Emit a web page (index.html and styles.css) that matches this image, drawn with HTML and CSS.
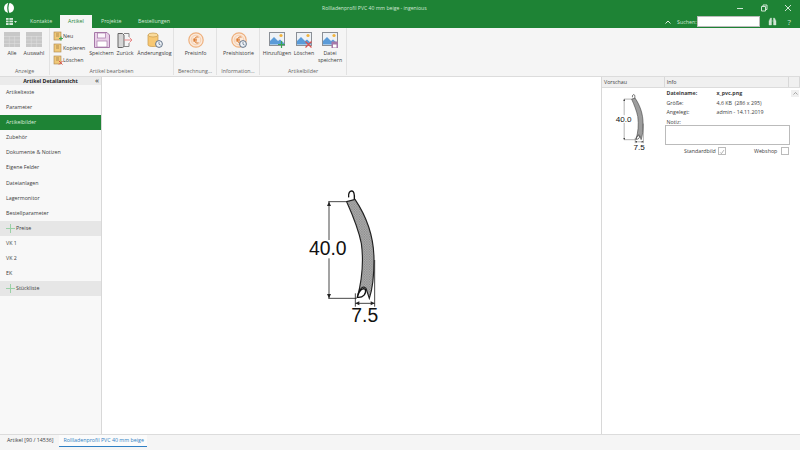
FILE: index.html
```html
<!DOCTYPE html>
<html lang="de">
<head>
    <meta charset="UTF-8">
    <title>Rollladenprofil PVC 40 mm beige - ingenious</title>
    <link rel="stylesheet" href="styles.css">
</head>
<body>
    <svg class="defs" width="0" height="0">
        <pattern id="raster" width="5" height="5" patternUnits="userSpaceOnUse">
            <rect width="5" height="5" fill="#b4b4b4"/>
            <circle cx="1.5" cy="1.5" r="1.2" fill="#6a6a6a"/>
            <circle cx="4" cy="4" r="1.2" fill="#6a6a6a"/>
        </pattern>
        <symbol id="profil" viewBox="0 0 300 450">
            <path d="M146 52C144 38 150 32 156 33C162 34 164 40 163 58" fill="none" stroke="#111" stroke-width="4"/>
            <path d="M140 65L165 58C200 110 222 170 222 240C222 290 218 325 208 355L198 325C190 316 180 322 172 352C186 300 192 250 184 190C176 150 158 105 140 65Z" fill="url(#raster)" stroke="#222" stroke-width="3.5"/>
            <path d="M172 352C176 332 188 322 196 328C200 340 190 354 172 352Z" fill="#fff" stroke="#111" stroke-width="4"/>
            <path d="M85 65H140M85 355H170M87 65V180M87 235V355M166 340V380M224 240V380M166 370H224" fill="none" stroke="#222" stroke-width="2.5"/>
            <path d="M87 65L81 78H93ZM87 355L81 342H93ZM166 370L178 364V376ZM224 370L212 364V376Z" fill="#222"/>
        </symbol>
        <symbol id="tabelle" viewBox="0 0 16 16">
            <rect width="16" height="15" fill="#c8c8c8"/>
            <path d="M0 4.5H16M0 8H16M0 11.5H16M5.3 4V15M10.6 4V15" stroke="#dedede" stroke-width=".6"/>
        </symbol>
        <symbol id="klein" viewBox="0 0 10 10">
            <rect x="1" y="1" width="7" height="8" fill="#f0c878" stroke="#a8824a" stroke-width=".6"/>
            <path d="M3 3H6M3 5H6" stroke="#8a6a3a" stroke-width=".6"/>
        </symbol>
        <symbol id="euro" viewBox="0 0 16 16">
            <circle cx="8" cy="8" r="7.2" fill="#fbe9da" stroke="#eeb17f" stroke-width="1.2"/>
            <circle cx="8" cy="8" r="4.8" fill="none" stroke="#f3c9a6" stroke-width=".8"/>
            <path d="M10.5 5.2C8.5 4.2 6.5 5.5 6.5 8C6.5 10.5 8.5 11.8 10.5 10.8M4.8 7.2H9M4.8 8.9H9" fill="none" stroke="#dc7b30" stroke-width="1"/>
        </symbol>
        <symbol id="uhr" viewBox="0 0 8 8">
            <circle cx="4" cy="4" r="3.4" fill="#eef3f8" stroke="#56677c" stroke-width=".9"/>
            <path d="M4 2V4.2L5.6 5" fill="none" stroke="#56677c" stroke-width=".7"/>
        </symbol>
        <symbol id="bild" viewBox="0 0 16 14">
            <rect x=".5" y=".5" width="15" height="13" fill="#eef2f6" stroke="#8a8f96"/>
            <path d="M1 12.5V9L5 5L9 9L11 7.5L15 11V12.5Z" fill="#5a9bd8"/>
            <circle cx="12" cy="3.5" r="1.6" fill="#f2b33d"/>
        </symbol>
    </svg>

    <header class="kopf">
        <div class="titelzeile">
            <svg class="logo" width="12" height="12" viewBox="0 0 12 12"><circle cx="6" cy="6" r="5" fill="#fff"/><path d="M6 .5C4.5 4 4.5 8 6 11.5" stroke="#1e8335" stroke-width="1.2" fill="none"/></svg>
            <span class="titel">Rollladenprofil PVC 40 mm beige - ingenious</span>
            <div class="fenster">
                <svg width="8" height="8" viewBox="0 0 8 8"><path d="M1 4.5H7" stroke="#cfe6d4"/></svg>
                <svg width="8" height="8" viewBox="0 0 8 8"><path d="M1.5 2.5H5.5V7H1.5ZM3 2.5V1H7V5.5H5.5" fill="none" stroke="#cfe6d4"/></svg>
                <svg width="8" height="8" viewBox="0 0 8 8"><path d="M1 1L7 7M7 1L1 7" stroke="#cfe6d4"/></svg>
            </div>
        </div>
        <nav class="tabzeile">
            <div class="appmenu">
                <svg width="7" height="7" viewBox="0 0 7 7"><rect width="7" height="7" fill="#d5e8d9"/><path d="M0 2.3H7M0 4.6H7M3 0V7" stroke="#1e8335" stroke-width=".7"/></svg>
                <svg width="3" height="2" viewBox="0 0 3 2"><path d="M0 0H3L1.5 2Z" fill="#d5e8d9"/></svg>
            </div>
            <span class="tab kontakte">Kontakte</span>
            <span class="tab aktiv">Artikel</span>
            <span class="tab projekte">Projekte</span>
            <span class="tab bestellungen">Bestellungen</span>
            <div class="suche">
                <svg width="6" height="4" viewBox="0 0 6 4"><path d="M.5 3.5L3 1L5.5 3.5" fill="none" stroke="#dcecdf"/></svg>
                <span class="suchlabel">Suchen:</span>
                <span class="suchfeld"></span>
                <svg class="fernglas" width="9" height="9" viewBox="0 0 9 9"><path d="M1 8V4L2.5 1H3.5V8ZM5.5 8V1H6.5L8 4V8ZM3.5 4H5.5" fill="#cfe6d4" stroke="#cfe6d4" stroke-width=".4"/></svg>
                <span class="hilfe">?</span>
            </div>
        </nav>
    </header>

    <section class="ribbon">
        <div class="gruppe g-anzeige">
            <div class="befehle">
                <div class="gross b16"><svg class="ico" viewBox="0 0 16 16"><use href="#tabelle"/></svg><span>Alle</span></div>
                <div class="gross b16"><svg class="ico" viewBox="0 0 16 16"><use href="#tabelle"/></svg><span>Auswahl</span></div>
            </div>
            <div class="gruppenname">Anzeige</div>
        </div>
        <div class="gruppe g-artikel">
            <div class="befehle">
                <div class="spalte">
                    <div class="kleinzeile"><svg width="10" height="10" viewBox="0 0 10 10"><use href="#klein"/><path d="M6 7.5H10M8 5.5V9.5" stroke="#3aa655" stroke-width="1.1"/></svg><span>Neu</span></div>
                    <div class="kleinzeile"><svg width="10" height="10" viewBox="0 0 10 10"><use href="#klein"/></svg><span>Kopieren</span></div>
                    <div class="kleinzeile"><svg width="10" height="10" viewBox="0 0 10 10"><use href="#klein"/><path d="M6 6L9.5 9.5M9.5 6L6 9.5" stroke="#d9534f" stroke-width="1"/></svg><span>Löschen</span></div>
                </div>
                <div class="gross b-speichern">
                    <svg class="ico" viewBox="0 0 16 16"><path d="M.5.5H13L15.5 3V15.5H.5Z" fill="#e8cfe8" stroke="#a678a8"/><rect x="3.5" y="1" width="8" height="5" fill="#fbf5fb" stroke="#a678a8" stroke-width=".7"/><rect x="3" y="9" width="10" height="6" fill="#fff" stroke="#a678a8" stroke-width=".7"/></svg>
                    <span>Speichern</span>
                </div>
                <div class="gross b-zurueck">
                    <svg class="ico" viewBox="0 0 16 16"><path d="M1 1.5H5.5L7 3V14.5L5.5 15.5H1Z" fill="#d6d6d6" stroke="#666"/><path d="M7 1.5H12V5M12 11V14.5H7" fill="none" stroke="#888"/><path d="M7 8H15M12.5 5.5L15 8L12.5 10.5" fill="none" stroke="#e88a8a"/></svg>
                    <span>Zurück</span>
                </div>
                <div class="gross b-log">
                    <svg class="ico" viewBox="0 0 16 16"><path d="M1 3V13C1 15 11 15 11 13V3Z" fill="#f7c873" stroke="#c79a4a" stroke-width=".7"/><ellipse cx="6" cy="3" rx="5" ry="2" fill="#fadb9c" stroke="#c79a4a" stroke-width=".7"/><use href="#uhr" x="8" y="8" width="8" height="8"/></svg>
                    <span>Änderungslog</span>
                </div>
            </div>
            <div class="gruppenname">Artikel bearbeiten</div>
        </div>
        <div class="gruppe g-berechnung">
            <div class="befehle">
                <div class="gross b-preis"><svg class="ico" viewBox="0 0 16 16"><use href="#euro"/></svg><span>Preisinfo</span></div>
            </div>
            <div class="gruppenname">Berechnung...</div>
        </div>
        <div class="gruppe g-info">
            <div class="befehle">
                <div class="gross b-preis"><svg class="ico" viewBox="0 0 16 16"><use href="#euro"/><use href="#uhr" x="8" y="8" width="8" height="8"/></svg><span>Preishistorie</span></div>
            </div>
            <div class="gruppenname">Information...</div>
        </div>
        <div class="gruppe g-bilder">
            <div class="befehle">
                <div class="gross b-bild">
                    <svg class="ico" viewBox="0 0 16 16"><use href="#bild" width="16" height="14"/><path d="M9 12.5H16M12.5 9V16" stroke="#3aa655" stroke-width="1.2"/></svg>
                    <span>Hinzufügen</span>
                </div>
                <div class="gross b-bild">
                    <svg class="ico" viewBox="0 0 16 16"><use href="#bild" width="16" height="14"/><path d="M9.5 9.5L15.5 15.5M15.5 9.5L9.5 15.5" stroke="#d9534f" stroke-width="1.2"/></svg>
                    <span>Löschen</span>
                </div>
                <div class="gross b-bild">
                    <svg class="ico" viewBox="0 0 16 16"><use href="#bild" width="16" height="14"/><rect x="9.5" y="9.5" width="6.5" height="6.5" fill="#a678a8"/><rect x="11" y="12.5" width="3.5" height="3" fill="#fff"/></svg>
                    <span>Datei<br>speichern</span>
                </div>
            </div>
            <div class="gruppenname">Artikelbilder</div>
        </div>
    </section>

    <main class="inhalt">
        <aside class="seite">
            <div class="seitenkopf"><b>Artikel Detailansicht</b><span class="zuklappen">«</span></div>
            <div class="eintrag">Artikeltexte</div>
            <div class="eintrag">Parameter</div>
            <div class="eintrag gewaehlt">Artikelbilder</div>
            <div class="eintrag">Zubehör</div>
            <div class="eintrag">Dokumente &amp; Notizen</div>
            <div class="eintrag">Eigene Felder</div>
            <div class="eintrag">Dateianlagen</div>
            <div class="eintrag">Lagermonitor</div>
            <div class="eintrag">Bestellparameter</div>
            <div class="eintrag block"><i class="plus"></i>Preise</div>
            <div class="eintrag">VK 1</div>
            <div class="eintrag">VK 2</div>
            <div class="eintrag">EK</div>
            <div class="eintrag block"><i class="plus"></i>Stückliste</div>
        </aside>

        <div class="bildflaeche">
            <svg class="profil-gross" viewBox="0 0 300 450" font-family="'Liberation Sans', sans-serif">
                <use href="#profil" width="300" height="450"/>
                <text x="27" y="225" font-size="58" fill="#111">40.0</text>
                <text x="154" y="425" font-size="58" fill="#111">7.5</text>
            </svg>
        </div>

        <aside class="details">
            <div class="spaltenkopf">
                <span class="k-vorschau">Vorschau</span>
                <span class="k-info">Info</span>
                <span class="k-rest"></span>
            </div>
            <div class="detailkoerper">
                <div class="vorschau">
                    <svg class="profil-klein" viewBox="0 0 300 450" font-family="'Liberation Sans', sans-serif">
                        <use href="#profil" width="300" height="450"/>
                        <text x="27" y="225" font-size="58" fill="#111">40.0</text>
                        <text x="154" y="425" font-size="58" fill="#111">7.5</text>
                    </svg>
                </div>
                <div class="info">
                    <div class="zeile"><b>Dateiname:</b><b>x_pvc.png</b></div>
                    <div class="zeile"><span>Größe:</span><span>4,6 KB&nbsp; (286 x 295)</span></div>
                    <div class="zeile"><span>Angelegt:</span><span>admin - 14.11.2019</span></div>
                    <div class="zeile"><span>Notiz:</span></div>
                    <div class="notiz"></div>
                    <div class="optionen">
                        <span class="o-std">Standardbild</span>
                        <span class="haken"><svg width="8" height="8" viewBox="0 0 8 8"><path d="M1.5 4.5L3.2 6.2L6.5 1.5" fill="none" stroke="#9a9a9a"/></svg></span>
                        <span class="o-web">Webshop</span>
                        <span class="haken"></span>
                    </div>
                </div>
                <div class="rollbalken">
                    <span class="rollknopf"><svg width="5" height="3" viewBox="0 0 5 3"><path d="M.5 2.5L2.5 .5L4.5 2.5" fill="none" stroke="#888" stroke-width=".7"/></svg></span>
                </div>
            </div>
        </aside>
    </main>

    <footer class="fuss">
        <span class="fusstab">Artikel [90 / 14536]</span>
        <span class="fusstab offen">Rollladenprofil PVC 40 mm beige</span>
    </footer>
</body>
</html>
```

FILE: styles.css
```css
* {
    box-sizing: border-box;
}

html, body {
    margin: 0;
    height: 100%;
}

body {
    width: 800px;
    height: 450px;
    overflow: hidden;
    display: flex;
    flex-direction: column;
    background-color: #f5f5f5;
    font-family: "Open Sans", "Liberation Sans", sans-serif;
    font-size: 5.3px;
    color: #3c3c3c;
}

.defs {
    position: absolute;
}

/* kopf */

.kopf {
    height: 28px;
    background-color: #1e8335;
    color: #d5e8d9;
}

.titelzeile {
    height: 15px;
    display: flex;
    align-items: center;
    padding-left: 3px;
}

.titel {
    margin-left: 307px;
    width: 134px;
    white-space: nowrap;
    font-size: 5.1px;
}

.fenster {
    margin-left: auto;
    display: flex;
    gap: 16px;
    padding-right: 8px;
}

.tabzeile {
    height: 13px;
    display: flex;
    align-items: center;
}

.appmenu {
    width: 21px;
    display: flex;
    align-items: center;
    gap: 1px;
    padding-left: 6px;
}

.tab {
    height: 13px;
    line-height: 13px;
    white-space: nowrap;
}

.kontakte {
    margin-left: 9px;
    width: 30px;
}

.tab.aktiv {
    width: 32px;
    text-align: center;
    background-color: #f5f5f5;
    color: #1e8335;
}

.projekte {
    margin-left: 9px;
    width: 37px;
}

.bestellungen {
    width: 40px;
}

.suche {
    margin-left: auto;
    display: flex;
    align-items: center;
}

.suchlabel {
    margin-left: 6px;
    width: 19.5px;
}

.suchfeld {
    width: 63px;
    height: 11px;
    background-color: #fff;
    border: 1px solid #bbb;
}

.fernglas {
    margin-left: 8px;
}

.hilfe {
    margin-left: 11px;
    width: 12.5px;
    font-size: 8px;
    line-height: 13px;
}

/* ribbon */

.ribbon {
    height: 49px;
    display: flex;
    background-color: #f5f5f5;
    border-bottom: 1px solid #dcdcdc;
}

.gruppe {
    height: 47px;
    display: flex;
    flex-direction: column;
    border-right: 1px solid #e2e2e2;
}

.g-anzeige { width: 50px; }
.g-artikel { width: 124px; }
.g-berechnung { width: 43px; }
.g-info { width: 43px; }
.g-bilder { width: 87px; }

.befehle {
    height: 39px;
    display: flex;
}

.gruppenname {
    text-align: center;
    white-space: nowrap;
    line-height: 8px;
    color: #666;
}

.gross {
    display: flex;
    flex-direction: column;
    align-items: center;
    padding-top: 4px;
    text-align: center;
    line-height: 7px;
    white-space: nowrap;
}

.gross .ico {
    width: 16px;
    height: 16px;
    margin-bottom: 2px;
}

.b16 { width: 22px; }
.b16:first-child { margin-left: 1px; }

.spalte {
    width: 39px;
    padding: 2px 0 0 3px;
}

.kleinzeile {
    height: 12px;
    display: flex;
    align-items: center;
}

.b-speichern { width: 25px; }
.b-zurueck { width: 22px; }
.b-log { width: 37px; }
.b-preis { width: 100%; padding-left: 1px; }
.b-bild { width: 27px; }
.b-bild:first-child { margin-left: 3.5px; }
.b-bild:last-child { margin-left: -1px; }

/* inhalt */

.inhalt {
    height: 358px;
    display: flex;
    background-color: #fff;
    border-bottom: 1px solid #dcdcdc;
}

.seite {
    width: 102px;
    background-color: #f8f8f8;
    border-right: 1px solid #d8d8d8;
}

.seitenkopf {
    height: 8px;
    display: flex;
    align-items: center;
    justify-content: center;
    position: relative;
    background-color: #ebebeb;
    color: #222;
}

.zuklappen {
    position: absolute;
    right: 2px;
    top: -2px;
    font-size: 8px;
    line-height: 10px;
}

.eintrag {
    height: 15.1px;
    line-height: 15px;
    padding-left: 6px;
    white-space: nowrap;
}

.gewaehlt {
    background-color: #1e8335;
    color: #dcecdf;
}

.block {
    display: flex;
    align-items: center;
    gap: 1px;
    background-color: #e6e6e6;
}

.plus {
    width: 9px;
    height: 9px;
    background:
        linear-gradient(#9ad0a6, #9ad0a6) center / 100% 1px no-repeat,
        linear-gradient(#9ad0a6, #9ad0a6) center / 1px 100% no-repeat;
}

.bildflaeche {
    width: 499px;
    display: flex;
    align-items: center;
    justify-content: center;
    padding: 0 3px 2px 0;
}

.profil-gross {
    width: 100px;
    height: 150px;
}

.details {
    width: 199px;
    border-left: 1px solid #d8d8d8;
}

.spaltenkopf {
    height: 11px;
    display: flex;
    line-height: 10px;
    background-color: #f0f0f0;
    border-bottom: 1px solid #dcdcdc;
}

.spaltenkopf span {
    padding-left: 2px;
    border-right: 1px solid #d8d8d8;
}

.k-vorschau { width: 63px; }
.k-info { width: 125px; }
.k-rest { width: 11px; }

.detailkoerper {
    display: flex;
}

.vorschau {
    width: 63px;
    padding: 2px 0 0 10px;
}

.profil-klein {
    display: block;
    width: 42px;
    height: 63px;
}

.info {
    width: 125px;
    padding-top: 1px;
}

.zeile {
    height: 9.6px;
    line-height: 9.6px;
    padding-left: 1.5px;
    display: grid;
    grid-template-columns: 50px 1fr;
    white-space: nowrap;
}

.notiz {
    height: 20px;
    margin-top: -2px;
    background-color: #fff;
    border: 1px solid #bbb;
}

.optionen {
    height: 10px;
    display: flex;
    align-items: center;
    padding-top: 2px;
}

.o-std {
    margin-left: 19px;
    width: 34px;
}

.o-web {
    margin-left: 28px;
    width: 27px;
}

.haken {
    width: 8px;
    height: 8px;
    display: flex;
    background-color: #fff;
    border: 1px solid #bbb;
}

.rollbalken {
    width: 10px;
    padding: 2px 0 0 1px;
}

.rollknopf {
    width: 8px;
    height: 7px;
    display: flex;
    align-items: center;
    justify-content: center;
    background-color: #f0f0f0;
}

/* fuss */

.fuss {
    height: 15px;
    display: flex;
    align-items: flex-start;
    padding-left: 7px;
    background-color: #f5f5f5;
}

.fusstab {
    line-height: 11px;
    white-space: nowrap;
}

.offen {
    margin-left: 5px;
    padding: 0 5px 0 5px;
    width: 88px;
    height: 12px;
    color: #2f7fc4;
    border-bottom: 1px solid #2f7fc4;
    background-color: #fbfbfb;
}
```
